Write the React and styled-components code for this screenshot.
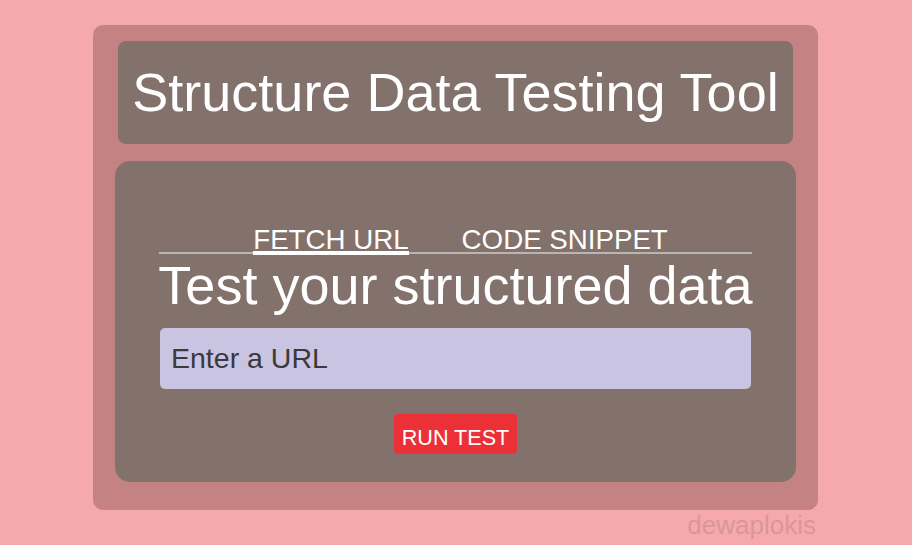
import React from "react";
import styled, { createGlobalStyle } from "styled-components";

const GlobalStyle = createGlobalStyle`
  html, body {
    margin: 0;
    padding: 0;
    background: #f6a9ab;
  }
  body {
    font-family: "Liberation Sans", Arial, Helvetica, sans-serif;
  }
  * { box-sizing: border-box; }
`;

const Page = styled.div`
  display: flex;
  flex-direction: column;
  align-items: flex-start;
  padding: 25px 0 0 93px;
  min-height: 545px;
`;

const Column = styled.div`
  width: 725px;
  display: flex;
  flex-direction: column;
`;

const Panel = styled.main`
  height: 485px;
  background: #c58283;
  border-radius: 10px;
  padding: 16px 22px 28px;
  display: flex;
  flex-direction: column;
  gap: 17px;
`;

const Header = styled.header`
  height: 103px;
  margin: 0 3px;
  background: #83716b;
  border-radius: 8px;
  display: flex;
  align-items: center;
  justify-content: center;
`;

const Title = styled.h1`
  margin: 0;
  font-size: 54px;
  font-weight: normal;
  color: #ffffff;
  line-height: 1.15;
  white-space: nowrap;
`;

const Card = styled.section`
  flex: 1;
  background: #83716b;
  border-radius: 15px;
  padding-top: 67px;
  display: flex;
  flex-direction: column;
  align-items: center;
`;

const Content = styled.div`
  width: 593px;
  display: flex;
  flex-direction: column;
  align-items: center;
`;

const TabBar = styled.nav`
  align-self: stretch;
  display: flex;
  justify-content: center;
  align-items: flex-end;
  gap: 53px;
  padding-left: 10px;
  border-bottom: 2px solid #b9b5b2;
`;

const Tab = styled.span`
  font-size: 27.7px;
  line-height: 23px;
  color: #ffffff;
  white-space: nowrap;
  border-bottom: 4px solid ${(p) => (p.$active ? "#ffffff" : "transparent")};
  margin-bottom: -3px;
  cursor: pointer;
  position: relative;
`;

const Heading = styled.h2`
  margin: 0;
  font-size: 54px;
  font-weight: normal;
  color: #ffffff;
  line-height: normal;
  white-space: nowrap;
`;

const UrlInput = styled.input`
  margin-top: 12px;
  width: 591px;
  height: 61px;
  border: none;
  outline: none;
  border-radius: 5px;
  background: #c8c4e2;
  padding: 0 0 0 11px;
  font-family: "Liberation Sans", Arial, sans-serif;
  font-size: 28.5px;
  color: #3b393b;
  &::placeholder {
    color: #3b393b;
    opacity: 1;
  }
`;

const RunButton = styled.button`
  margin-top: 25px;
  width: 123px;
  height: 40px;
  padding: 7px 0 0;
  line-height: 33px;
  border: none;
  border-radius: 4px;
  background: #eb3038;
  color: #ffffff;
  font-family: "Liberation Sans", Arial, sans-serif;
  font-size: 21.6px;
  text-align: center;
  cursor: pointer;
`;

const Watermark = styled.div`
  text-align: right;
  padding-right: 2px;
  font-size: 26px;
  color: #d9969a;
  line-height: normal;
`;

export default function App() {
  return (
    <>
      <GlobalStyle />
      <Page>
        <Column>
          <Panel>
            <Header>
              <Title>Structure Data Testing Tool</Title>
            </Header>
            <Card>
              <Content>
                <TabBar>
                  <Tab $active>FETCH URL</Tab>
                  <Tab>CODE SNIPPET</Tab>
                </TabBar>
                <Heading>Test your structured data</Heading>
                <UrlInput type="text" placeholder="Enter a URL" />
                <RunButton type="button">RUN TEST</RunButton>
              </Content>
            </Card>
          </Panel>
          <Watermark>dewaplokis</Watermark>
        </Column>
      </Page>
    </>
  );
}
